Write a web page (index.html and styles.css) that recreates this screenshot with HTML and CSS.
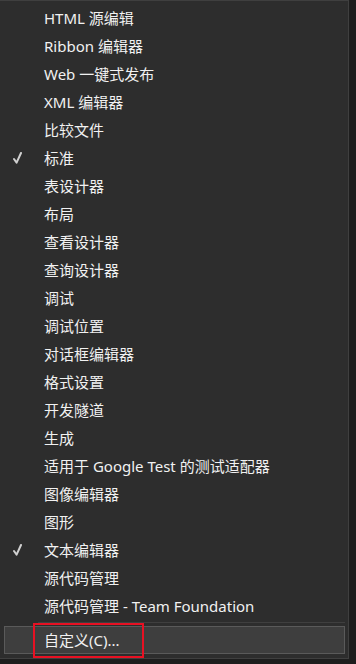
FILE: index.html
```html
<!DOCTYPE html>
<html lang="zh-CN">
<head>
    <meta charset="UTF-8">
    <meta name="viewport" content="width=device-width, initial-scale=1.0">
    <title>工具栏</title>
    <link rel="stylesheet" href="styles.css">
</head>
<body>
    <div class="menu">
        <!-- Symbolleisten -->
        <ul class="items">
            <li class="item">HTML 源编辑</li>
            <li class="item">Ribbon 编辑器</li>
            <li class="item">Web 一键式发布</li>
            <li class="item">XML 编辑器</li>
            <li class="item">比较文件</li>
            <li class="item checked">标准</li>
            <li class="item">表设计器</li>
            <li class="item">布局</li>
            <li class="item">查看设计器</li>
            <li class="item">查询设计器</li>
            <li class="item">调试</li>
            <li class="item">调试位置</li>
            <li class="item">对话框编辑器</li>
            <li class="item">格式设置</li>
            <li class="item">开发隧道</li>
            <li class="item">生成</li>
            <li class="item">适用于 Google Test 的测试适配器</li>
            <li class="item">图像编辑器</li>
            <li class="item">图形</li>
            <li class="item checked">文本编辑器</li>
            <li class="item">源代码管理</li>
            <li class="item">源代码管理 - Team Foundation</li>
        </ul>

        <div class="separator"></div>

        <div class="item customize">
            自定义(C)...
            <span class="mark"></span>
        </div>
    </div>
</body>
</html>
```

FILE: styles.css
```css
body {
    margin: 0;
    background-color: #1e1e1e;
    font-family: "Noto Sans", "Noto Sans CJK SC", sans-serif;
    font-size: 15px;
    color: #f1f1f1;
}

.menu {
    width: 349px;
    height: 659px;
    box-sizing: border-box;
    background-color: #2d2d2d;
    border-top: 1px solid #3f3f3f;
    border-right: 1px solid #3f3f3f;
    border-bottom: 1px solid #3f3f3f;
    padding: 3px 3px 0 4px;
}

.items {
    list-style: none;
    margin: 0;
    padding: 0;
}

.item {
    position: relative;
    height: 28px;
    line-height: 28px;
    padding-left: 40px;
    white-space: nowrap;
}

.checked::before {
    content: "";
    position: absolute;
    left: 9px;
    top: 8px;
    width: 9px;
    height: 12px;
    background: no-repeat center / contain url("data:image/svg+xml,%3Csvg xmlns='http://www.w3.org/2000/svg' viewBox='0 0 9 12'%3E%3Cpath d='M1 7 L3.6 10.6 L8 1' fill='none' stroke='%23d0d0d0' stroke-width='2' stroke-linecap='round' stroke-linejoin='round'/%3E%3C/svg%3E");
}

.separator {
    height: 1px;
    margin: 2px 0 3px 34px;
    background-color: #3f3f3f;
}

.customize {
    height: 26px;
    line-height: 26px;
    background-color: #3e3e3e;
    border: 1px solid #5a5a5a;
    padding-left: 39px;
}

.mark {
    position: absolute;
    left: 28px;
    top: -4px;
    width: 107px;
    height: 31px;
    border: 2px solid #e81123;
}
```
